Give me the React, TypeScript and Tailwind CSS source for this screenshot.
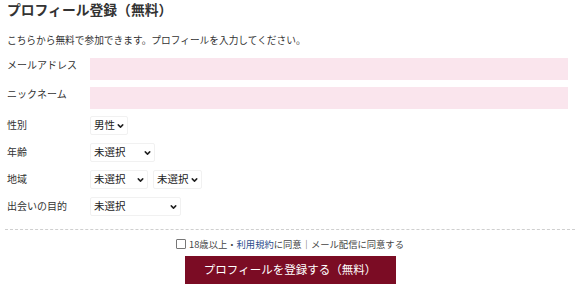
import { ChevronDown } from "lucide-react"

const font = { fontFamily: '"Noto Sans CJK JP", "Noto Sans", sans-serif' }

function Select({ value, width }: { value: string; width: string }) {
  return (
    <div className={`relative h-[19px] ${width}`}>
      <select
        defaultValue={value}
        className="h-full w-full appearance-none rounded-[2px] border border-[#f1f1f1] bg-white pl-[3px] text-[10.5px] leading-none text-[#222] outline-none"
        style={font}
      >
        <option>{value}</option>
      </select>
      <ChevronDown
        className="pointer-events-none absolute right-[3px] top-1/2 h-[9px] w-[9px] -translate-y-1/2 text-[#222]"
        strokeWidth={4}
      />
    </div>
  )
}

export default function App() {
  return (
    <div className="h-[284px] w-[580px] bg-white text-[#333]" style={font}>
      <div className="px-[7px] pt-[1px]">
        <h1 className="text-[13.8px] font-bold leading-[16px] text-[#333]">プロフィール登録（無料）</h1>
        <p className="mt-[17px] text-[9.7px] leading-[12px]">
          こちらから無料で参加できます。プロフィールを入力してください。
        </p>

        <div className="mt-[12px] grid grid-cols-[83px_1fr] gap-y-[7px] pr-[5px] text-[10px]">
          <label className="-mt-[1px]">メールアドレス</label>
          <input className="h-[22px] w-full bg-[#fae5ed] outline-none" />
          <label className="-mt-[1px]">ニックネーム</label>
          <input className="h-[22px] w-full bg-[#fae5ed] outline-none" />
        </div>

        <div className="mt-[7px] grid grid-cols-[83px_1fr] items-center gap-y-[8px] text-[10px]">
          <label className="-mt-[3px]">性別</label>
          <Select value="男性" width="w-[38px]" />
          <label className="-mt-[3px]">年齢</label>
          <Select value="未選択" width="w-[65px]" />
          <label className="-mt-[3px]">地域</label>
          <div className="flex gap-[5px]">
            <Select value="未選択" width="w-[58px]" />
            <Select value="未選択" width="w-[49px]" />
          </div>
          <label className="-mt-[3px]">出会いの目的</label>
          <Select value="未選択" width="w-[91px]" />
        </div>
      </div>

      <div className="mx-[5px] mt-[13px] border-t border-dashed border-[#cfcfcf]" />

      <div className="mt-[8px] flex items-center justify-center gap-[3px] text-[9.3px] leading-[12px] text-[#444]">
        <input type="checkbox" className="h-[10px] w-[10px] appearance-none rounded-[1px] border border-[#777] bg-white" />
        <span>
          18歳以上・<span className="text-[#2b4c8c]">利用規約</span>に同意｜メール配信に同意する
        </span>
      </div>

      <div className="mt-[6px] flex justify-center">
        <button className="h-[28px] w-[211px] bg-[#7b0c24] text-[11.5px] text-white" style={font}>
          プロフィールを登録する（無料）
        </button>
      </div>
    </div>
  )
}
